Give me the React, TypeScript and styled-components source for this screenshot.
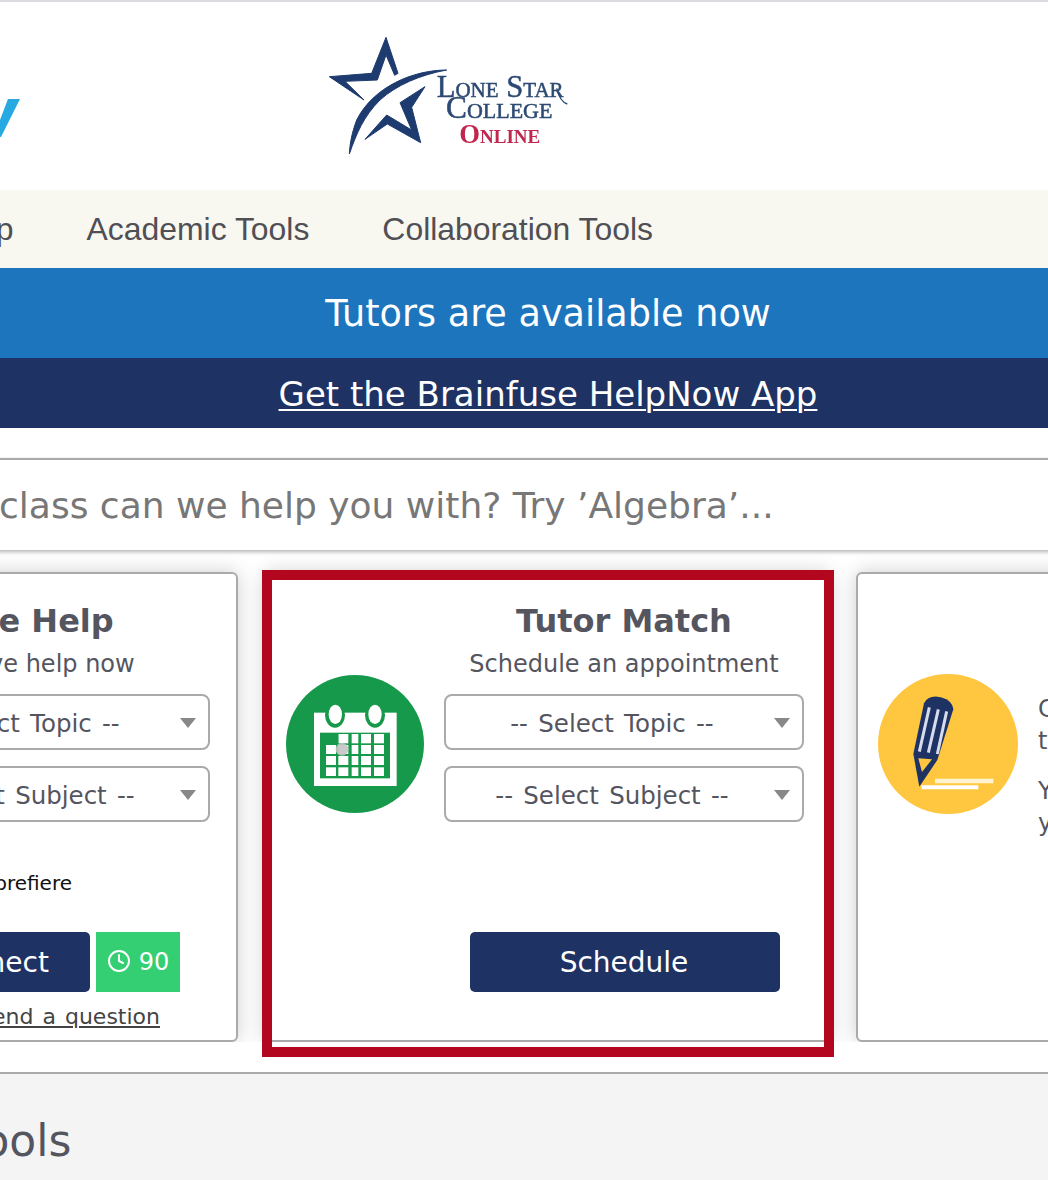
import React from "react";
import styled, { createGlobalStyle } from "styled-components";
import { Clock } from "lucide-react";

const GlobalStyle = createGlobalStyle`
  html, body {
    margin: 0;
    padding: 0;
    background: #fff;
    overflow: hidden;
  }
  * {
    box-sizing: border-box;
  }
`;

const Viewport = styled.div`
  width: 1048px;
  height: 1180px;
  overflow: hidden;
`;

// the page is wider than the window and is cut off on both sides
const Page = styled.div`
  width: 1800px;
  margin-left: -353px;
  font-family: "DejaVu Sans", sans-serif;
  color: #55555f;
`;

const Header = styled.header`
  height: 190px;
  border-top: 2px solid #dcdce0;
  display: flex;
  padding-left: 353px;
`;

const BrandMark = styled.svg`
  width: 20px;
  height: 40px;
  margin-top: 95px;
  margin-right: 280px;
  filter: blur(0.5px);
`;

const CollegeLogo = styled.svg`
  width: 300px;
  height: 150px;
  margin-top: 18px;
  filter: blur(0.7px);
`;

const Nav = styled.nav`
  height: 78px;
  background: #f8f7f0;
  display: flex;
  align-items: center;
  gap: 73px;
  padding-left: 301px;
`;

const NavItem = styled.a`
  font-family: "Liberation Sans", Arial, sans-serif;
  font-size: 31.9px;
  color: #4f4f55;
`;

const Banner = styled.div<{ $tone: "blue" | "navy" }>`
  height: ${(p) => (p.$tone === "blue" ? 90 : 70)}px;
  background: ${(p) => (p.$tone === "blue" ? "#1d75bd" : "#1e3264")};
  color: #fff;
  font-size: ${(p) => (p.$tone === "blue" ? 36.6 : 34)}px;
  display: flex;
  align-items: center;
  justify-content: center;
  padding: ${(p) => (p.$tone === "blue" ? "0 0 0 2px" : "2px 0 0 2px")};
`;

const BannerLink = styled.a`
  color: #fff;
  text-decoration: underline;
  text-decoration-thickness: 2px;
  text-underline-offset: 3px;
`;

const Main = styled.main`
  height: 646px;
  padding-top: 30px;
  border-bottom: 2px solid #aaa;
`;

const SearchInput = styled.input`
  display: block;
  width: 100%;
  height: 92px;
  border: none;
  border-top: 2px solid #aaa;
  box-shadow: 0 2px 4px rgba(0, 0, 0, 0.3);
  padding: 0 0 0 246px;
  font-family: "DejaVu Sans", sans-serif;
  font-size: 36px;
  outline: none;

  &::placeholder {
    color: #777;
    opacity: 1;
  }
`;

const CardRow = styled.div`
  display: flex;
  justify-content: center;
  gap: 26px;
  margin-top: 22px;
`;

const CardSlot = styled.div`
  position: relative;
`;

const Card = styled.section<{ $tight?: boolean }>`
  width: 566px;
  height: 470px;
  background: #fff;
  border: 2px solid #aaa;
  border-radius: 6px;
  box-shadow: 0 0 20px rgba(0, 0, 0, 0.2);
  clip-path: inset(-24px -24px 0 -24px);
  display: flex;
  padding: 0 ${(p) => (p.$tight ? "26px 0 18px" : "24px 0 20px")};
`;

const Highlight = styled.div`
  position: absolute;
  top: -2px;
  left: -2px;
  right: -4px;
  bottom: -15px;
  border: 10px solid #b2071f;
  pointer-events: none;
`;

const IconBadge = styled.svg<{ $size: number; $top: number }>`
  flex: none;
  width: ${(p) => p.$size}px;
  height: ${(p) => p.$size}px;
  margin-top: ${(p) => p.$top}px;
  margin-right: 20px;
  filter: blur(0.4px);
`;

const Column = styled.div`
  width: 360px;
  display: flex;
  flex-direction: column;
  align-items: center;
`;

const Title = styled.h2`
  margin: 27px 0 0;
  height: 40px;
  line-height: 40px;
  font-size: 32px;
  font-weight: 700;
`;

const Subtitle = styled.p`
  margin: 7px 0 14px;
  height: 32px;
  line-height: 32px;
  font-size: 24px;
`;

const SelectBox = styled.div`
  position: relative;
  width: 100%;
  height: 56px;
  margin-bottom: 16px;
  border: 2px solid #aaa;
  border-radius: 8px;
  font-size: 24.5px;
  word-spacing: 2.5px;
  display: flex;
  align-items: center;
  justify-content: center;
  padding: 2px 24px 0 0;

  &::after {
    content: "";
    position: absolute;
    right: 12px;
    top: 22px;
    border-left: 8px solid transparent;
    border-right: 8px solid transparent;
    border-top: 10px solid #888;
  }
`;

const Preference = styled.div`
  width: 100%;
  height: 38px;
  line-height: 38px;
  margin-top: 26px;
  padding-right: 138px;
  text-align: right;
  font-size: 20px;
  color: #111;
`;

const Actions = styled.div<{ $top: number; $left?: number }>`
  display: flex;
  gap: 6px;
  margin-top: ${(p) => p.$top}px;
  margin-left: ${(p) => p.$left ?? 0}px;
`;

const PrimaryButton = styled.button<{ $width: number; $inset: number }>`
  width: ${(p) => p.$width}px;
  height: 60px;
  border: none;
  border-radius: 5px;
  padding: 0 2px 0 ${(p) => p.$inset}px;
  background: #1e3264;
  color: #fff;
  font-family: "DejaVu Sans", sans-serif;
  font-size: 28px;
`;

const WaitBadge = styled.div`
  width: 84px;
  height: 60px;
  background: #33cf72;
  color: #fff;
  font-size: 24px;
  display: flex;
  align-items: center;
  justify-content: center;
  gap: 8px;
`;

const WaitIcon = styled(Clock)`
  margin-top: -3px;
`;

const SendLink = styled.a`
  width: 100%;
  margin-top: 12px;
  padding-right: 50px;
  text-align: right;
  font-size: 22px;
  color: #444;
  text-decoration: underline;
  word-spacing: 2px;
`;

const Blurb = styled.div`
  padding-top: 119px;
  width: 400px;
  font-size: 24px;
  line-height: 32px;
  white-space: nowrap;
`;

const BlurbLine = styled.p`
  margin: 0 0 18px;
`;

const ToolsSection = styled.section`
  height: 106px;
  background: #f4f4f4;
  padding: 39px 0 0 316px;
`;

const ToolsHeading = styled.h1`
  margin: 0;
  font-size: 44px;
  line-height: 56px;
  font-weight: 400;
`;

function Calendar() {
  return (
    <IconBadge $size={138} $top={101} viewBox="78 75 414 414">
      <circle cx="285" cy="282" r="207" fill="#17994b" />
      <rect x="162" y="188" width="248" height="220" fill="#fff" />
      <rect x="180" y="248" width="210" height="137" fill="#17994b" />
      {[198, 235, 275, 303, 342].map((x, i) => (
        <rect key={x} x={x} y="252" width={[30, 30, 20, 30, 30][i]} height="126" fill="#fff" />
      ))}
      <rect x="180" y="252" width="55" height="33" fill="#17994b" />
      <rect x="180" y="312" width="210" height="6" fill="#17994b" />
      <rect x="180" y="345" width="210" height="7" fill="#17994b" />
      <rect x="180" y="280" width="210" height="5" fill="#17994b" />
      <ellipse cx="225" cy="195" rx="30" ry="38" fill="#17994b" />
      <ellipse cx="345" cy="195" rx="30" ry="38" fill="#17994b" />
      <ellipse cx="226" cy="193" rx="20" ry="29" fill="#fff" />
      <ellipse cx="345" cy="193" rx="20" ry="29" fill="#fff" />
      <circle cx="246" cy="298" r="19" fill="#c4c4c4" opacity="0.9" />
    </IconBadge>
  );
}

function Pencil() {
  return (
    <IconBadge $size={140} $top={100} viewBox="84 72 420 420">
      <circle cx="294" cy="282" r="210" fill="#ffc740" />
      <path d="M208 410 L190 312 L222 160 Q232 138 262 140 Q305 145 310 178 L262 330 Z" fill="#1e3264" />
      <path d="M238 172 L208 305 M265 178 L235 308 M290 184 L262 312" stroke="#d6dced" strokeWidth="9" />
      <path d="M205 325 L246 328 L216 366 Z" fill="#ffc740" />
      <path d="M255 393 H430" stroke="#fff4d0" strokeWidth="13" />
      <path d="M215 412 H385" stroke="#fff" strokeWidth="12" />
    </IconBadge>
  );
}

function LoneStarLogo() {
  return (
    <CollegeLogo viewBox="0 0 900 450">
      <g fill="#1d3b6e" stroke="#1d3b6e" strokeWidth="3">
        <path d="M258 52 L215 160 L88 170 L192 240 L135 184 L232 180 L258 105 L284 166 L294 160 Z" />
        <path d="M440 150 C340 150 220 200 170 300 C155 340 150 370 148 402 C170 340 190 290 240 240 C290 195 360 165 440 150 Z" />
        <path d="M375 200 L300 248 L335 330 L260 285 L195 358 L262 312 L362 368 L335 262 Z" />
      </g>
      <g fontFamily="Liberation Serif, serif" style={{ fontVariant: "small-caps" }}>
        <text x="410" y="232" fontSize="92" fill="#2d4a72" stroke="#2d4a72" strokeWidth="1.5">
          Lone Star
        </text>
        <text x="438" y="295" fontSize="94" fill="#2d4a72" stroke="#2d4a72" strokeWidth="1.5">
          College
        </text>
        <text x="478" y="368" fontSize="80" fontWeight="700" fill="#c0264e">
          Online
        </text>
      </g>
      <path d="M770 205 Q780 245 802 252" fill="none" stroke="#2d4a72" strokeWidth="4" />
    </CollegeLogo>
  );
}

export default function App() {
  return (
    <Viewport>
      <GlobalStyle />
      <Page>
        <Header>
          <BrandMark viewBox="0 0 20 40">
            <path d="M8 2 H20 L1 40 H0 V23 Z" fill="#27a9e1" />
          </BrandMark>
          <LoneStarLogo />
        </Header>
        <Nav>
          <NavItem>Help</NavItem>
          <NavItem>Academic Tools</NavItem>
          <NavItem>Collaboration Tools</NavItem>
        </Nav>
        <Banner $tone="blue">Tutors are available now</Banner>
        <Banner $tone="navy">
          <BannerLink>Get the Brainfuse HelpNow App</BannerLink>
        </Banner>
        <Main>
          <SearchInput placeholder="What class can we help you with? Try ’Algebra’..." />
          <CardRow>
            <CardSlot>
              <Card $tight>
                <IconBadge $size={138} $top={101} viewBox="0 0 138 138">
                  <circle cx="69" cy="69" r="69" fill="#1d75bd" />
                </IconBadge>
                <Column>
                  <Title>Live Help</Title>
                  <Subtitle>Get live help now</Subtitle>
                  <SelectBox>-- Select Topic --</SelectBox>
                  <SelectBox>-- Select Subject --</SelectBox>
                  <Preference>Yo prefiere</Preference>
                  <Actions $top={30}>
                    <PrimaryButton $width={210} $inset={14}>Connect</PrimaryButton>
                    <WaitBadge>
                      <WaitIcon size={24} strokeWidth={2} />
                      90
                    </WaitBadge>
                  </Actions>
                  <SendLink>or send a question</SendLink>
                </Column>
              </Card>
            </CardSlot>
            <CardSlot>
              <Card>
                <Calendar />
                <Column>
                  <Title>Tutor Match</Title>
                  <Subtitle>Schedule an appointment</Subtitle>
                  <SelectBox>-- Select Topic --</SelectBox>
                  <SelectBox>-- Select Subject --</SelectBox>
                  <Actions $top={94} $left={2}>
                    <PrimaryButton $width={310} $inset={0}>Schedule</PrimaryButton>
                  </Actions>
                </Column>
              </Card>
              <Highlight />
            </CardSlot>
            <CardSlot>
              <Card>
                <Pencil />
                <Blurb>
                  <BlurbLine>
                    Connect with a writing
                    <br />
                    tutor for a paper review.
                  </BlurbLine>
                  <BlurbLine>
                    You can upload your essay and
                    <br />
                    your feedback arrives by email.
                  </BlurbLine>
                </Blurb>
              </Card>
            </CardSlot>
          </CardRow>
        </Main>
        <ToolsSection>
          <ToolsHeading>Tools</ToolsHeading>
        </ToolsSection>
      </Page>
    </Viewport>
  );
}
